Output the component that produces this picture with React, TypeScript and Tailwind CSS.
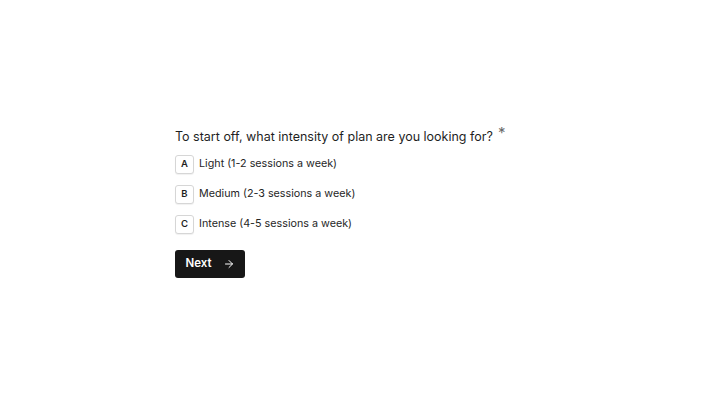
import { ArrowRight } from 'lucide-react'

const options = [
  { key: 'A', label: 'Light (1-2 sessions a week)' },
  { key: 'B', label: 'Medium (2-3 sessions a week)' },
  { key: 'C', label: 'Intense (4-5 sessions a week)' },
]

export default function App() {
  return (
    <div className="flex h-screen w-full items-center justify-center bg-white font-['Inter',sans-serif] text-[#1f1f1f]">
      <div className="w-[370px]">
        {/* Question */}
        <div className="flex items-start text-[12.5px] leading-[20px]">
          <span>To start off, what intensity of plan are you looking for?</span>
          <span className="ml-[5px] -mt-[4px] text-[15px] text-[#6b6b6b]">*</span>
        </div>

        {/* Options */}
        <div className="mt-[8px] flex flex-col gap-[11px]">
          {options.map((o) => (
            <div key={o.key} className="flex items-center gap-[5px]">
              <div className="flex h-[19px] w-[19px] items-center justify-center rounded-[3px] border border-[#d6d6d6] bg-white text-[9.5px] font-semibold shadow-[0_1px_1px_rgba(0,0,0,0.06)]">
                {o.key}
              </div>
              <span className="text-[10.75px] text-[#262626]">{o.label}</span>
            </div>
          ))}
        </div>

        {/* Next */}
        <button className="mt-[16px] flex h-[28px] w-[70px] items-center justify-center gap-[11px] rounded-[3px] bg-[#171717] text-[11.5px] font-semibold text-white">
          Next
          <ArrowRight size={12} strokeWidth={2} />
        </button>
      </div>
    </div>
  )
}
